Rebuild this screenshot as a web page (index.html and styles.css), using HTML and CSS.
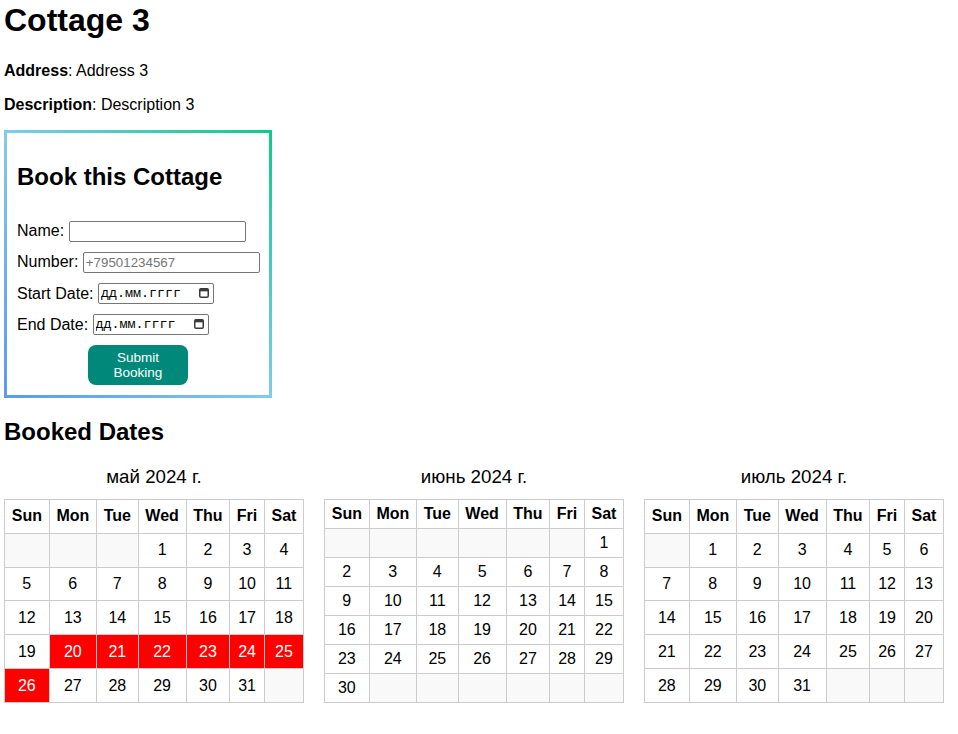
FILE: index.html
```html
<!DOCTYPE html>
<html lang="ru">
<head>
<meta charset="utf-8">
<title>Cottage 3</title>
<link rel="stylesheet" href="styles.css">
</head>
<body>
<div class="page">
  <h1 class="title">Cottage 3</h1>
  <p class="info"><strong>Address</strong>: Address 3</p>
  <p class="info"><strong>Description</strong>: Description 3</p>

  <div class="booking">
    <h2 class="booking-title">Book this Cottage</h2>
    <form class="form">
      <div class="row"><label>Name:</label> <input class="field field-text" type="text"></div>
      <div class="row"><label>Number:</label> <input class="field field-text" type="text" placeholder="+79501234567"></div>
      <div class="row"><label>Start Date:</label> <span class="date-field"><input class="field field-date" type="text" placeholder="дд.мм.гггг"><svg class="date-icon" viewBox="0 0 10 11" width="10" height="11"><rect x="0.75" y="1.75" width="8.5" height="8.5" rx="1.2" fill="none" stroke="#3b3b3b" stroke-width="1.5"/><rect x="0.75" y="1.75" width="8.5" height="2.6" fill="#3b3b3b"/></svg></span></div>
      <div class="row"><label>End Date:</label> <span class="date-field"><input class="field field-date" type="text" placeholder="дд.мм.гггг"><svg class="date-icon" viewBox="0 0 10 11" width="10" height="11"><rect x="0.75" y="1.75" width="8.5" height="8.5" rx="1.2" fill="none" stroke="#3b3b3b" stroke-width="1.5"/><rect x="0.75" y="1.75" width="8.5" height="2.6" fill="#3b3b3b"/></svg></span></div>
      <div class="actions"><button class="submit" type="button">Submit Booking</button></div>
    </form>
  </div>

  <h2 class="section-title">Booked Dates</h2>
  <div class="calendars">
    <div class="calendar">
      <div class="caption">май 2024 г.</div>
      <table class="cal-table">
        <tr><th>Sun</th><th>Mon</th><th>Tue</th><th>Wed</th><th>Thu</th><th>Fri</th><th>Sat</th></tr>
        <tr><td class="empty"></td><td class="empty"></td><td class="empty"></td><td>1</td><td>2</td><td>3</td><td>4</td></tr>
        <tr><td>5</td><td>6</td><td>7</td><td>8</td><td>9</td><td>10</td><td>11</td></tr>
        <tr><td>12</td><td>13</td><td>14</td><td>15</td><td>16</td><td>17</td><td>18</td></tr>
        <tr><td>19</td><td class="booked">20</td><td class="booked">21</td><td class="booked">22</td><td class="booked">23</td><td class="booked">24</td><td class="booked">25</td></tr>
        <tr><td class="booked">26</td><td>27</td><td>28</td><td>29</td><td>30</td><td>31</td><td class="empty"></td></tr>
      </table>
    </div>
    <div class="calendar">
      <div class="caption">июнь 2024 г.</div>
      <table class="cal-table">
        <tr><th>Sun</th><th>Mon</th><th>Tue</th><th>Wed</th><th>Thu</th><th>Fri</th><th>Sat</th></tr>
        <tr><td class="empty"></td><td class="empty"></td><td class="empty"></td><td class="empty"></td><td class="empty"></td><td class="empty"></td><td>1</td></tr>
        <tr><td>2</td><td>3</td><td>4</td><td>5</td><td>6</td><td>7</td><td>8</td></tr>
        <tr><td>9</td><td>10</td><td>11</td><td>12</td><td>13</td><td>14</td><td>15</td></tr>
        <tr><td>16</td><td>17</td><td>18</td><td>19</td><td>20</td><td>21</td><td>22</td></tr>
        <tr><td>23</td><td>24</td><td>25</td><td>26</td><td>27</td><td>28</td><td>29</td></tr>
        <tr><td>30</td><td class="empty"></td><td class="empty"></td><td class="empty"></td><td class="empty"></td><td class="empty"></td><td class="empty"></td></tr>
      </table>
    </div>
    <div class="calendar">
      <div class="caption">июль 2024 г.</div>
      <table class="cal-table">
        <tr><th>Sun</th><th>Mon</th><th>Tue</th><th>Wed</th><th>Thu</th><th>Fri</th><th>Sat</th></tr>
        <tr><td class="empty"></td><td>1</td><td>2</td><td>3</td><td>4</td><td>5</td><td>6</td></tr>
        <tr><td>7</td><td>8</td><td>9</td><td>10</td><td>11</td><td>12</td><td>13</td></tr>
        <tr><td>14</td><td>15</td><td>16</td><td>17</td><td>18</td><td>19</td><td>20</td></tr>
        <tr><td>21</td><td>22</td><td>23</td><td>24</td><td>25</td><td>26</td><td>27</td></tr>
        <tr><td>28</td><td>29</td><td>30</td><td>31</td><td class="empty"></td><td class="empty"></td><td class="empty"></td></tr>
      </table>
    </div>
  </div>
</div>
</body>
</html>
```

FILE: styles.css
```css
html, body {
  margin: 0;
  padding: 0;
  background: #fff;
}

body {
  font-family: "Liberation Sans", Arial, sans-serif;
  font-size: 16px;
  color: #000;
}

.page {
  padding: 1.5px 4px 0 4px;
}

.title {
  font-size: 32px;
  font-weight: bold;
  margin: 0 0 23.5px 0;
}

.info {
  margin: 16px 0;
}

.booking {
  width: 242px;
  margin-top: 16px;
  padding: 10px;
  border: 3px solid transparent;
  border-image: linear-gradient(to top right, #5a9af2 0%, #80cbea 50%, #0fca88 100%) 1;
}

.booking-title {
  font-size: 24px;
  font-weight: bold;
  margin: 20px 0;
}

.form {
  display: flex;
  flex-direction: column;
  gap: 10px;
  padding-top: 10px;
}

.row {
  height: 21px;
  white-space: nowrap;
}

.field {
  box-sizing: border-box;
  height: 21px;
  font-family: "Liberation Sans", Arial, sans-serif;
  font-size: 13.33px;
  padding: 1px 2px;
  border: 1px solid #767676;
  border-radius: 2px;
  background: #fff;
  vertical-align: baseline;
  margin: 0;
}

.field-text {
  width: 177px;
}

.field::placeholder {
  color: #757575;
}

.date-field {
  position: relative;
  display: inline-block;
  vertical-align: 1.5px;
}

.field-date {
  width: 116px;
  font-family: "Liberation Mono", "Courier New", monospace;
  font-size: 13.33px;
  padding-left: 2px;
  padding-right: 20px;
}

.field-date::placeholder {
  color: #000;
}

.date-icon {
  position: absolute;
  right: 5px;
  top: 4px;
}

.actions {
  text-align: center;
  height: 40px;
}

.submit {
  width: 100px;
  height: 40px;
  padding: 0 10px;
  border: none;
  border-radius: 8px;
  background: #00897b;
  color: #fff;
  font-family: "Liberation Sans", Arial, sans-serif;
  font-size: 13.5px;
  line-height: 15px;
  cursor: pointer;
}

.section-title {
  font-size: 24px;
  font-weight: bold;
  margin: 20px 0;
}

.calendars {
  display: flex;
  gap: 20px;
}

.calendar {
  width: 300px;
}

.caption {
  font-size: 18.72px;
  text-align: center;
  margin-bottom: 11px;
}

.cal-table {
  width: 300px;
  height: 204px;
  border-collapse: collapse;
}

.cal-table th,
.cal-table td {
  border: 1px solid #ccc;
  padding: 4px 6px;
  text-align: center;
  font-size: 16px;
}

.cal-table th {
  font-weight: bold;
  background: #fff;
}

.cal-table td.empty {
  background: #f9f9f9;
}

.cal-table td.booked {
  background: #ff0000;
  color: #fff;
}
```
